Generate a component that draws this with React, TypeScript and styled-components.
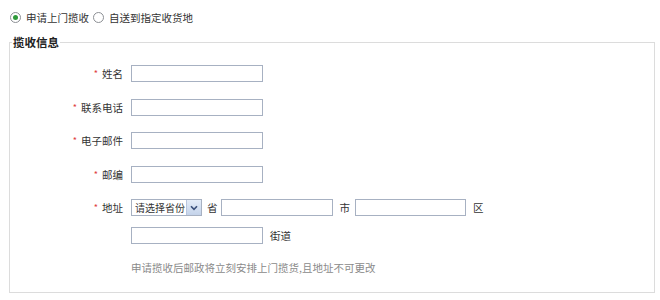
import styled, { createGlobalStyle } from 'styled-components';

const GlobalStyle = createGlobalStyle`
  body {
    margin: 0;
    background: #fff;
    font-family: "Noto Sans CJK SC", "Noto Sans", sans-serif;
    font-size: 10.5px;
    color: #333;
  }
`;

const Page = styled.div`
  width: 660px;
  height: 300px;
  overflow: hidden;
`;

const ModeBar = styled.div`
  height: 35px;
  display: flex;
  align-items: center;
  padding-left: 10px;
`;

const RadioLabel = styled.label`
  display: flex;
  align-items: center;
  margin-right: 4px;
  line-height: 14px;
`;

const Radio = styled.input.attrs({ type: 'radio' })`
  appearance: none;
  width: 11px;
  height: 11px;
  margin: 0 5px 0 0;
  border: 1px solid #8c8f94;
  border-radius: 50%;
  background: #fff;
  display: grid;
  place-items: center;

  &:checked::after {
    content: '';
    width: 5px;
    height: 5px;
    border-radius: 50%;
    background: #2f9a3a;
  }
`;

const Box = styled.fieldset`
  margin: 0 5px 0 9px;
  padding: 8px 0 0 0;
  border: 1px solid #dcdcdc;
  height: 258px;
  box-sizing: border-box;
  min-width: 0;
`;

const Legend = styled.legend`
  padding: 0 1px;
  margin-left: 2px;
  font-size: 11.5px;
  font-weight: bold;
  line-height: 14px;
  color: #222;
`;

const Form = styled.div`
  display: grid;
  grid-template-columns: 113px 1fr;
  column-gap: 8px;
  grid-auto-rows: 33.5px;
`;

const Label = styled.div`
  display: flex;
  align-items: center;
  justify-content: flex-end;
  height: 33.5px;
`;

const Star = styled.span`
  color: #e0393e;
  font-size: 9px;
  margin-right: 4px;
`;

const Field = styled.div`
  display: flex;
  align-items: center;
  height: 33.5px;
`;

const AddressField = styled.div`
  grid-row: span 3;
  padding-top: 8.25px;
  display: flex;
  flex-direction: column;
`;

const Line = styled.div`
  display: flex;
  align-items: center;
  height: 17px;
  & + & {
    margin-top: 11px;
  }
`;

const TextInput = styled.input<{ $w: number }>`
  width: ${(p) => p.$w}px;
  height: 17px;
  box-sizing: border-box;
  border: 1px solid #a7b1c2;
  padding: 0 3px;
  margin: 0;
  font: inherit;
  outline: none;
`;

const SelectBox = styled.div`
  position: relative;
  width: 71px;
  height: 17px;
  box-sizing: border-box;
  border: 1px solid #a7b1c2;
  display: flex;
`;

const Select = styled.select`
  appearance: none;
  border: none;
  background: #fff;
  font: inherit;
  font-size: 10px;
  color: #333;
  padding: 0 0 0 3px;
  margin: 0;
  width: 100%;
  height: 15px;
  line-height: 15px;
  outline: none;
`;

const Arrow = styled.span`
  position: absolute;
  right: 0;
  top: 0;
  width: 14px;
  height: 15px;
  background: linear-gradient(#e4ecf8, #c4d3ea);
  border-left: 1px solid #b8c6de;
  display: grid;
  place-items: center;
  pointer-events: none;
`;

const Unit = styled.span<{ $wide?: boolean }>`
  margin: ${(p) => (p.$wide ? '0 5px 0 7px' : '0 3px 0 5px')};
`;

const Note = styled.div`
  margin-top: 17px;
  color: #8a8a8a;
  line-height: 14px;
`;

const fields = ['姓名', '联系电话', '电子邮件', '邮编'];

export default function App() {
  return (
    <Page>
      <GlobalStyle />
      <ModeBar>
        <RadioLabel>
          <Radio name="mode" defaultChecked />
          申请上门揽收
        </RadioLabel>
        <RadioLabel>
          <Radio name="mode" />
          自送到指定收货地
        </RadioLabel>
      </ModeBar>
      <Box>
        <Legend>揽收信息</Legend>
        <Form>
          {fields.flatMap((f) => [
            <Label key={f + '-l'}>
              <Star>*</Star>
              {f}
            </Label>,
            <Field key={f + '-f'}>
              <TextInput $w={132} />
            </Field>,
          ])}
          <Label>
            <Star>*</Star>
            地址
          </Label>
          <AddressField>
            <Line>
              <SelectBox>
                <Select defaultValue="">
                  <option value="">请选择省份</option>
                </Select>
                <Arrow>
                  <svg width="8" height="6" viewBox="0 0 8 6">
                    <path d="M1 1.2 L4 4.4 L7 1.2" fill="none" stroke="#3a4f7a" strokeWidth="1.6" />
                  </svg>
                </Arrow>
              </SelectBox>
              <Unit>省</Unit>
              <TextInput $w={112} />
              <Unit $wide>市</Unit>
              <TextInput $w={111} />
              <Unit $wide>区</Unit>
            </Line>
            <Line>
              <TextInput $w={132} />
              <Unit $wide>街道</Unit>
            </Line>
            <Note>申请揽收后邮政将立刻安排上门揽货,且地址不可更改</Note>
          </AddressField>
        </Form>
      </Box>
    </Page>
  );
}
